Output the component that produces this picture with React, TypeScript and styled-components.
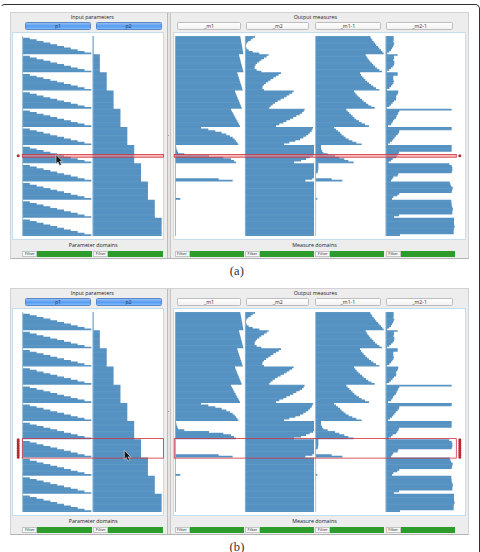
import React from "react";
import styled, { createGlobalStyle } from "styled-components";

const Global = createGlobalStyle`
  * { box-sizing: border-box; }
  html, body { margin: 0; background: #fff; overflow: hidden; }
`;

const Page = styled.main`
  width: 480px;
  height: 552px;
  overflow: hidden;
  background: #fff;
  padding-top: 4px;
`;

const Frame = styled.div`
  height: 560px;
  border: 1px solid #303030;
  border-left-color: transparent;
  border-radius: 5px;
  padding: 7px 0 0 9px;
`;

const Figure = styled.figure`
  margin: 0;
  height: 276px;
`;

const Caption = styled.figcaption`
  width: 454px;
  text-align: center;
  font: 12.5px/25px "Liberation Serif", serif;
  letter-spacing: 0.2px;
  color: #333;
`;

const Window = styled.div`
  display: flex;
  width: 458.5px;
  height: 247px;
  background: #e6e6e6;
  border: 1px solid #d2d2d2;
  border-bottom-color: #b5b5b5;
`;

const Pane = styled.section<{ $w: number }>`
  width: ${(p) => p.$w}px;
  flex: none;
  background: #ededed;
  display: flex;
  flex-direction: column;
`;

const Splitter = styled.div`
  width: 4px;
  flex: none;
  background: #e4e4e4;
  border-left: 1px solid #bcbcbc;
  border-right: 1px solid #c6c6c6;
  display: flex;
  align-items: center;
  justify-content: center;
  &::after {
    content: "";
    width: 1.5px;
    height: 1.5px;
    flex: none;
    border-radius: 50%;
    background: #888;
  }
`;

const Title = styled.div<{ $center: number }>`
  width: ${(p) => p.$center * 2}px;
  height: 9px;
  font: 500 5.3px/9px "Open Sans", "Noto Sans", sans-serif;
  color: #1c1c1c;
  text-align: center;
  white-space: nowrap;
`;

const Heads = styled.div<{ $left: number; $gap: number }>`
  display: flex;
  height: 10px;
  padding-left: ${(p) => p.$left}px;
  gap: ${(p) => p.$gap}px;
`;

const Head = styled.button<{ $active?: boolean; $w: number }>`
  width: ${(p) => p.$w}px;
  height: 8px;
  flex: none;
  padding: 0;
  border: 1px solid ${(p) => (p.$active ? "#5d86c4" : "#bdbdbd")};
  border-radius: 1.5px;
  background: ${(p) =>
    p.$active
      ? "linear-gradient(#92bdf4, #559bf0 55%, #7dbcff)"
      : "linear-gradient(#fff, #f1f1f1)"};
  color: ${(p) => (p.$active ? "#18365f" : "#333")};
  font: 5.2px/6px "Open Sans", "Noto Sans", sans-serif;
  text-align: center;
`;

const Plot = styled.div<{ $left: number; $w: number }>`
  margin-left: ${(p) => p.$left}px;
  width: ${(p) => p.$w}px;
  height: 208px;
  background: #fff;
  border: 1px solid #c3dcee;
`;

const Foot = styled.div<{ $center: number }>`
  width: ${(p) => p.$center * 2}px;
  height: 11px;
  font: 500 5.3px/11px "Open Sans", "Noto Sans", sans-serif;
  color: #1c1c1c;
  text-align: center;
  white-space: nowrap;
`;

const Filters = styled.div<{ $left: number }>`
  display: flex;
  padding-left: ${(p) => p.$left}px;
  gap: 1.4px;
  height: 5.6px;
`;

const Domain = styled.div<{ $w: number }>`
  width: ${(p) => p.$w}px;
  display: flex;
  flex: none;
  height: 5.6px;
`;

const FilterButton = styled.span`
  width: 15px;
  height: 5.6px;
  flex: none;
  background: #f8f8f8;
  border: 0.5px solid #c4c4c4;
  color: #222;
  font: 4.2px/4px "Open Sans", "Noto Sans", sans-serif;
  text-align: center;
`;

const Range = styled.span`
  flex: 1;
  background: #2c9c2b;
`;

const Drawing = styled.svg`
  position: absolute;
  left: 0;
  top: 0;
  pointer-events: none;
`;

const Stage = styled.div`
  position: relative;
  width: 458.5px;
`;

/* Right edge of every bar in a column, in thirds of a pixel, one list per band of eleven rows. */
const fill = (v: number, n = 11) => Array<number>(n).fill(v);
const ramp = (a: number, b: number) =>
  Array.from({ length: 11 }, (_, i) => a + ((b - a) * i) / 10);

/* The first parameter falls from ten to zero, one step per row, below each band's empty row. */
const p1 = Array.from({ length: 11 }, () => ramp(69, 274)).flat();
const p2 = Array.from({ length: 11 }, (_, b) => fill(b === 0 ? 281 : 279 + b * 20.6)).flat();
const m1 = [
  ramp(241, 250), ramp(237, 250), ramp(232, 248), ramp(225, 245), ramp(213, 240),
  [123, 145, 166, 185, 199, 210, 218, 224, 228, 232, 235],
  [48, 49, 50, 52, 54, 73, 147, 190, 213, 222, 228],
  [...fill(47, 9), 176, 218],
  [...fill(47, 10), 61],
  fill(47), fill(47),
].flat();
const m2 = [
  [285, 278, 272, 265, 260, 258, 258, 260, 266, 278, 298],
  [326, 320, 312, 304, 298, 291, 287, 284, 284, 290, 304],
  [363, 356, 348, 340, 332, 325, 318, 312, 308, 307, 312],
  [401, 396, 388, 380, 372, 362, 353, 345, 338, 332, 328],
  [434, 431, 426, 419, 409, 400, 390, 379, 370, 358, 348],
  [459, 457, 455, 450, 445, 438, 430, 420, 406, 388, 372],
  [...fill(462, 6), 459, 449, 438, 423, 402],
  [...fill(462, 9), 457, 436],
  fill(462), fill(462), fill(462),
].flat();
const m1d = [
  [181, 184, 187, 191, 195, 199, 204, 208, 213, 217, 221],
  [167, 170, 173, 177, 181, 186, 190, 195, 201, 208, 216],
  [150, 153, 157, 161, 166, 171, 177, 183, 190, 198, 208],
  [132, 136, 140, 145, 150, 156, 161, 168, 175, 184, 194],
  [109, 113, 118, 123, 128, 133, 139, 147, 155, 165, 177],
  [72, 78, 84, 90, 95, 101, 107, 116, 127, 139, 155],
  [33, 33, 34, 36, 40, 53, 75, 88, 103, 115, 131],
  [25, 25, 25, 25, 24, 23, 18, 18, 18, 65, 97],
  [...fill(17, 10), 22],
  fill(17), fill(17),
].flat();
const m2d = [
  [251, 251, 251, 250, 253, 251, 249, 246, 243, 238, 232],
  [263, 252, 252, 250, 253, 253, 252, 248, 243, 238, 231],
  [263, 263, 250, 250, 250, 252, 250, 247, 243, 238, 231],
  [265, 264, 262, 258, 259, 258, 252, 248, 243, 238, 230],
  [425, 268, 265, 263, 260, 258, 253, 249, 247, 243, 234],
  [425, 425, 268, 267, 263, 258, 254, 250, 246, 240, 234],
  [425, 425, 425, 425, 267, 265, 262, 258, 248, 243, 236],
  [418, 425, 427, 427, 427, 425, 265, 263, 250, 247, 243],
  [419, 421, 423, 428, 428, 426, 425, 268, 262, 250, 246],
  [424, 424, 425, 425, 427, 429, 428, 427, 427, 267, 252],
  [432, 432, 432, 432, 433, 434, 432, 431, 431, 431, 270],
].flat();

const TOP = 36;
const ROW = 200 / 121;

const columns = [
  { data: p1, origin: 0, left: 67 },
  { data: p2, origin: 0, left: 278 },
  { data: m1, origin: 160, left: 45 },
  { data: m2, origin: 160, left: 255 },
  { data: m1d, origin: 310, left: 16 },
  { data: m2d, origin: 310, left: 227 },
];

const outline = (data: number[], origin: number, left: number) => {
  const x0 = origin + left / 3;
  let d = `M${x0} ${TOP}`;
  data.forEach((v, i) => {
    const x = (origin + v / 3).toFixed(2);
    d += `L${x} ${(TOP + i * ROW).toFixed(2)}V${(TOP + (i + 1) * ROW).toFixed(2)}`;
  });
  return `${d}H${x0}Z`;
};

type Selection = { id: string; y: number; h: number; tint: boolean; cursor: [number, number] };

const Bars = ({ id, y, h, tint, cursor }: Selection) => (
  <Drawing width="458" height="247" viewBox="10 12 458 247">
    <defs>
      <pattern id={`rows-${id}`} width="8" height={ROW * 4} y={TOP} patternUnits="userSpaceOnUse">
        <rect width="8" height={ROW * 4} fill="#5591c1" />
        <rect width="8" height="0.5" fill="#68a0cb" />
      </pattern>
    </defs>
    {columns.map((c) => (
      <path
        key={`${c.origin}-${c.left}`}
        d={outline(c.data, c.origin, c.left)}
        fill={`url(#rows-${id})`}
      />
    ))}
    {columns.map((c) => (
      <path
        key={`${c.origin}-${c.left}`}
        d={`M${c.origin + c.left / 3 + 0.3} 36v200`}
        stroke="#9cc5e2"
        strokeWidth="0.7"
      />
    ))}
    <g fill={tint ? "#ff808088" : "none"} stroke="#c9333f" strokeWidth="0.8">
      <rect x="22.3" y={y} width="141.2" height={h} />
      <rect x="174.3" y={y} width="282" height={h} />
    </g>
    {tint ? (
      <g fill="#c0272d">
        <circle cx="18.2" cy={y + h / 2} r="1.5" />
        <circle cx="459.8" cy={y + h / 2} r="1.5" />
      </g>
    ) : (
      <g stroke="#c0272d" strokeWidth="3" strokeLinecap="round" strokeDasharray="0.1 1.65">
        <path d={`M18.2 ${y + 1.2}v${h - 2}M459.8 ${y + 1.2}v${h - 2}`} />
      </g>
    )}
    <path
      transform={`translate(${cursor[0]} ${cursor[1]}) scale(1.1)`}
      d="M0 0V8.2L1.9 6.6L3.2 9.8L4.9 9L3.5 6H6Z"
      fill="#151515"
      stroke="#d8dde2"
      strokeWidth="0.6"
    />
  </Drawing>
);

const Workspace = (props: Selection) => (
  <Stage>
    <Window>
      <Pane $w={155.5}>
        <Title $center={81.3}>Input parameters</Title>
        <Heads $left={14} $gap={4.5}>
          <Head $active $w={66}>p1</Head>
          <Head $active $w={66}>p2</Head>
        </Heads>
        <Plot $left={1} $w={152.4} />
        <Foot $center={82.2}>Parameter domains</Foot>
        <Filters $left={11.3}>
          <Domain $w={69.6}><FilterButton>Filter</FilterButton><Range /></Domain>
          <Domain $w={69.6}><FilterButton>Filter</FilterButton><Range /></Domain>
        </Filters>
      </Pane>
      <Splitter />
      <Pane $w={297}>
        <Title $center={144.8}>Output measures</Title>
        <Heads $left={6.8} $gap={5.2}>
          <Head $w={63.5}>_m1</Head>
          <Head $w={63.5}>_m2</Head>
          <Head $w={66.5}>_m1-1</Head>
          <Head $w={66.5}>_m2-1</Head>
        </Heads>
        <Plot $left={2.5} $w={293} />
        <Foot $center={144}>Measure domains</Foot>
        <Filters $left={4}>
          {["m1", "m2", "m1-1", "m2-1"].map((k) => (
            <Domain key={k} $w={69}><FilterButton>Filter</FilterButton><Range /></Domain>
          ))}
        </Filters>
      </Pane>
    </Window>
    <Bars {...props} />
  </Stage>
);

export default function App() {
  return (
    <Page>
      <Global />
      <Frame>
        <Figure>
          <Workspace id="a" y={154.4} h={2.8} tint cursor={[56, 154.7]} />
          <Caption>(a)</Caption>
        </Figure>
        <Figure>
          <Workspace id="b" y={162.6} h={19.5} tint={false} cursor={[124.3, 174.3]} />
          <Caption>(b)</Caption>
        </Figure>
      </Frame>
    </Page>
  );
}
